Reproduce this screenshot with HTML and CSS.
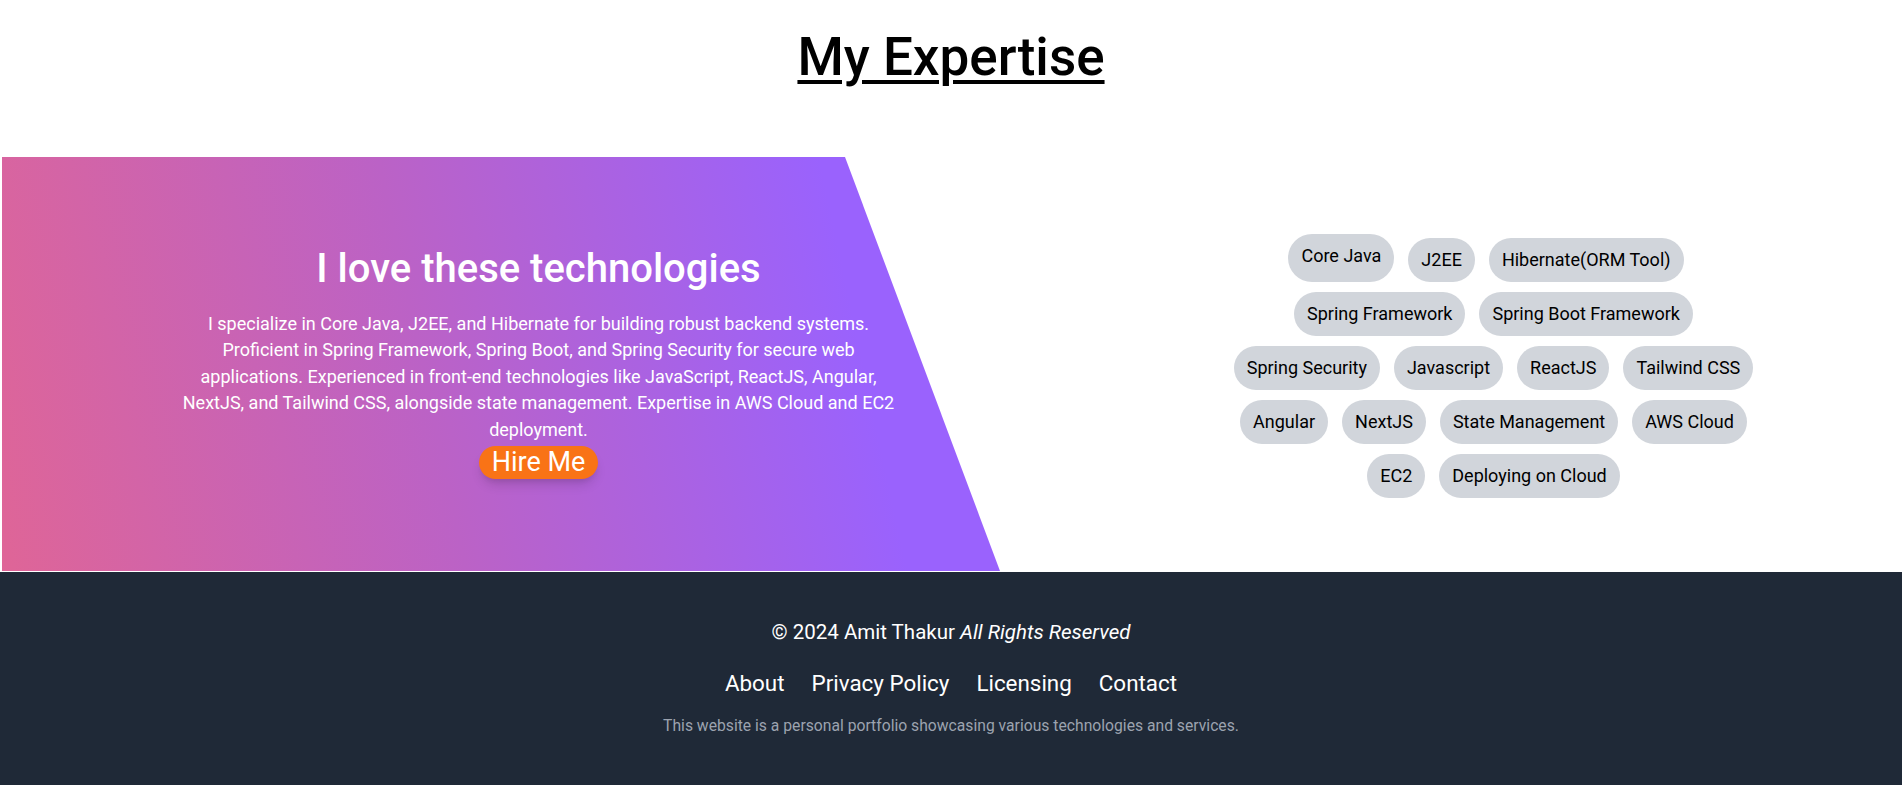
FILE: index.html
```html
<!DOCTYPE html>
<html lang="en">
<head>
<meta charset="utf-8">
<title>My Expertise</title>
<link rel="stylesheet" href="styles.css">
</head>
<body>
<main class="page">
  <section class="expertise">
    <h1 class="title">My Expertise</h1>
    <div class="split">
      <div class="intro">
        <h2 class="intro-heading">I love these technologies</h2>
        <p class="intro-text">I specialize in Core Java, J2EE, and Hibernate for building robust backend systems. Proficient in Spring Framework, Spring Boot, and Spring Security for secure web applications. Experienced in front-end technologies like JavaScript, ReactJS, Angular, NextJS, and Tailwind CSS, alongside state management. Expertise in AWS Cloud and EC2 deployment.</p>
        <a class="hire" href="#">Hire Me</a>
      </div>
      <div class="skills">
        <div class="skill-row skill-row-first">
          <span class="tag tag-raised">Core Java</span>
          <span class="tag">J2EE</span>
          <span class="tag">Hibernate(ORM Tool)</span>
        </div>
        <div class="skill-row">
          <span class="tag">Spring Framework</span>
          <span class="tag">Spring Boot Framework</span>
        </div>
        <div class="skill-row">
          <span class="tag">Spring Security</span>
          <span class="tag">Javascript</span>
          <span class="tag">ReactJS</span>
          <span class="tag">Tailwind CSS</span>
        </div>
        <div class="skill-row">
          <span class="tag">Angular</span>
          <span class="tag">NextJS</span>
          <span class="tag">State Management</span>
          <span class="tag">AWS Cloud</span>
        </div>
        <div class="skill-row">
          <span class="tag">EC2</span>
          <span class="tag">Deploying on Cloud</span>
        </div>
      </div>
    </div>
  </section>
  <footer class="footer">
    <p class="copy">© 2024 Amit Thakur <em>All Rights Reserved</em></p>
    <nav class="footer-links">
      <a href="#">About</a>
      <a href="#">Privacy Policy</a>
      <a href="#">Licensing</a>
      <a href="#">Contact</a>
    </nav>
    <p class="footer-note">This website is a personal portfolio showcasing various technologies and services.</p>
  </footer>
</main>
</body>
</html>
```

FILE: styles.css
```css
html {
  overflow-y: scroll;
  background: #ffffff;
}
html::-webkit-scrollbar {
  width: 3px;
}
html::-webkit-scrollbar-track {
  background: #f1f1f1;
}
html::-webkit-scrollbar-thumb {
  background: #c1c1c1;
}
body {
  margin: 0;
  font-family: Roboto, "Liberation Sans", Arial, sans-serif;
  color: #000;
  background: #fff;
}
.page {
  display: flex;
  flex-direction: column;
}
.expertise {
  display: flex;
  flex-direction: column;
  padding-top: 24px;
  margin-bottom: 1px;
}
.title {
  margin: 0 0 67px;
  font-size: 53px;
  line-height: 66px;
  font-weight: 500;
  text-align: center;
  text-decoration: underline;
  text-decoration-thickness: 4px;
  text-underline-offset: 5px;
}
.split {
  display: flex;
  align-items: flex-start;
}
.intro {
  width: 1073px;
  height: 414px;
  box-sizing: border-box;
  padding-top: 88px;
  margin-left: 2px;
  flex-shrink: 0;
  display: flex;
  flex-direction: column;
  align-items: center;
  background: linear-gradient(78deg, #df6597 0%, #bb62c6 40%, #9a62fd 78%);
  clip-path: polygon(0 0, 843px 0, 998px 100%, 0 100%);
  color: #fff;
  text-align: center;
}
.intro-heading {
  margin: 0 0 18px;
  font-size: 40px;
  line-height: 48px;
  font-weight: 500;
}
.intro-text {
  margin: 0;
  max-width: 720px;
  font-size: 18px;
  line-height: 26.4px;
}
.hire {
  margin-top: 3px;
  padding: 0 13px;
  border-radius: 9999px;
  background: #f97316;
  color: #fff;
  font-size: 27px;
  line-height: 33px;
  text-decoration: none;
  box-shadow: 0 8px 12px -3px rgba(0, 0, 0, 0.15), 0 4px 6px -4px rgba(0, 0, 0, 0.12);
}
.skills {
  flex: 1;
  display: flex;
  flex-direction: column;
  gap: 10px;
  padding-top: 77px;
  padding-left: 10px;
}
.skill-row {
  display: flex;
  justify-content: center;
  align-items: flex-end;
  gap: 14px;
}
.skill-row-first {
  padding-right: 15px;
}
.tag {
  padding: 8px 13px;
  border-radius: 9999px;
  background: #d1d5db;
  color: #000;
  font-size: 18px;
  line-height: 28px;
}
.tag-raised {
  padding-bottom: 12px;
}
.footer {
  background: #1f2937;
  color: #fff;
  text-align: center;
  padding: 46px 0 60px;
}
.copy {
  margin: 0;
  font-size: 20.5px;
  line-height: 28px;
}
.footer-links {
  display: flex;
  justify-content: center;
  gap: 27px;
  margin-top: 21px;
}
.footer-links a {
  color: #fff;
  text-decoration: none;
  font-size: 22.4px;
  line-height: 32px;
}
.footer-note {
  margin: 17px 0 0;
  color: #9ca3af;
  font-size: 15.7px;
  line-height: 20px;
}
```
